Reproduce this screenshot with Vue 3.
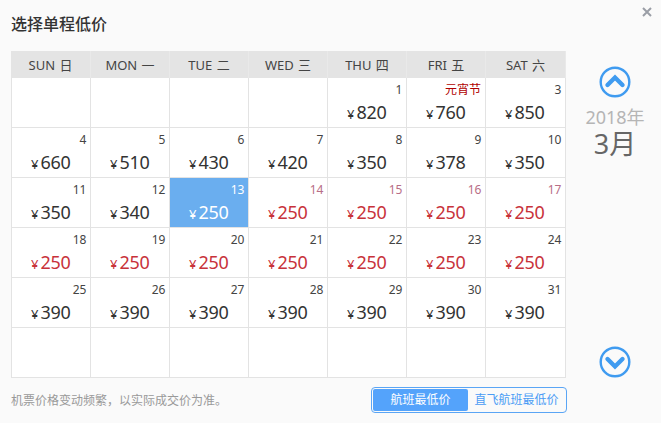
<script setup>
const weeks = ['SUN 日', 'MON 一', 'TUE 二', 'WED 三', 'THU 四', 'FRI 五', 'SAT 六']

const prices = [
  820, 760, 850,
  660, 510, 430, 420, 350, 378, 350,
  350, 340, 250, 250, 250, 250, 250,
  250, 250, 250, 250, 250, 250, 250,
  390, 390, 390, 390, 390, 390, 390,
]

const days = []
for (let i = 0; i < 4; i++) days.push({ empty: true })
prices.forEach((price, i) => {
  const date = i + 1
  days.push({
    date,
    price,
    label: date === 2 ? '元宵节' : date,
    low: price === 250 && date !== 13,
    active: date === 13,
    muted: date >= 14 && date <= 17,
  })
})
while (days.length < 42) days.push({ empty: true })
</script>

<template>
  <div class="dialog">
    <svg class="close" width="10" height="10" viewBox="0 0 10 10">
      <path d="M1 1 L9 9 M9 1 L1 9" stroke="#9a9ea6" stroke-width="2" fill="none" />
    </svg>
    <h2 class="title">选择单程低价</h2>

    <div class="main">
      <div class="calendar">
        <div class="head">
          <div v-for="w in weeks" :key="w" class="head-cell">{{ w }}</div>
        </div>
        <div class="grid">
          <div
            v-for="(d, i) in days"
            :key="i"
            class="cell"
            :class="{ active: d.active, low: d.low }"
          >
            <template v-if="!d.empty">
              <div class="date" :class="{ holiday: d.date === 2, muted: d.muted }">{{ d.label }}</div>
              <div class="price"><span class="yen">¥</span>{{ d.price }}</div>
            </template>
          </div>
        </div>
      </div>

      <div class="side">
        <svg class="arrow up" width="32" height="32" viewBox="0 0 32 32">
          <circle cx="16" cy="16" r="14.3" fill="none" stroke="#3f9bf0" stroke-width="2.4" />
          <path d="M8.5 19 L16 11.5 L23.5 19" fill="none" stroke="#3f9bf0" stroke-width="4.4" stroke-linecap="round" stroke-linejoin="miter" />
        </svg>
        <div class="year">2018年</div>
        <div class="month">3月</div>
        <svg class="arrow down" width="32" height="32" viewBox="0 0 32 32">
          <circle cx="16" cy="16" r="14.3" fill="none" stroke="#3f9bf0" stroke-width="2.4" />
          <path d="M8.5 13 L16 20.5 L23.5 13" fill="none" stroke="#3f9bf0" stroke-width="4.4" stroke-linecap="round" stroke-linejoin="miter" />
        </svg>
      </div>
    </div>

    <div class="foot">
      <span class="note">机票价格变动频繁，以实际成交价为准。</span>
      <div class="switch">
        <span class="tab on">航班最低价</span>
        <span class="tab">直飞航班最低价</span>
      </div>
    </div>
  </div>
</template>

<style>
html, body {
  margin: 0;
  background: #fafafa;
}
</style>

<style scoped>
.dialog {
  position: relative;
  box-sizing: border-box;
  width: 661px;
  height: 423px;
  padding: 0 0 0 11px;
  background: #fafafa;
  font-family: "Noto Sans", "Noto Sans CJK SC", sans-serif;
  color: #333;
  overflow: hidden;
}

.close {
  position: absolute;
  top: 7px;
  right: 9px;
}

.title {
  margin: 0;
  height: 51px;
  padding-top: 13px;
  box-sizing: border-box;
  font-size: 16px;
  line-height: 22px;
  font-weight: 500;
  color: #333;
}

.main {
  display: flex;
}

.calendar {
  width: 555px;
}

.head {
  display: grid;
  grid-template-columns: 80px repeat(5, 79px) 80px;
  height: 27px;
  background: #e4e4e4;
}

.head-cell {
  box-sizing: border-box;
  text-align: center;
  font-size: 13px;
  word-spacing: 1px;
  line-height: 28px;
  color: #444;
  border-right: 1px solid #e9e9e9;
}

.grid {
  display: grid;
  grid-template-columns: repeat(6, 79px) 80px;
  grid-auto-rows: 50px;
  background: #fff;
  border-left: 1px solid #e3e3e3;
}

.cell {
  box-sizing: border-box;
  border-right: 1px solid #e3e3e3;
  border-bottom: 1px solid #e3e3e3;
  padding: 5px 4px 0 0;
  background: #fff;
}

.cell.active {
  background: #6aaeef;
  color: #fff;
}

.date {
  text-align: right;
  font-size: 12px;
  letter-spacing: -0.3px;
  line-height: 14px;
  color: #444;
}

.date.holiday {
  color: #b00000;
  letter-spacing: 0;
}

.date.muted {
  color: #b86e86;
}

.cell.active .date {
  color: #fff;
}

.price {
  margin-top: 4px;
  padding-left: 19px;
  font-size: 18px;
  letter-spacing: -0.3px;
  line-height: 22px;
  color: #333;
}

.yen {
  font-size: 13px;
  letter-spacing: 0;
  margin-right: 2px;
}

.cell.low .price {
  color: #c8323a;
}

.cell.active .price {
  color: #fff;
}

.side {
  flex: 1;
  display: flex;
  flex-direction: column;
  align-items: center;
  padding: 15px 0 0 3px;
  box-sizing: border-box;
  height: 327px;
}

.arrow {
  flex: none;
}

.year {
  margin-top: 9px;
  font-size: 18px;
  line-height: 20px;
  color: #b5b5b5;
}

.month {
  font-size: 27px;
  line-height: 34px;
  color: #666;
}

.arrow.down {
  margin-top: auto;
}

.foot {
  display: flex;
  align-items: center;
  justify-content: space-between;
  width: 556px;
  margin-top: 9px;
}

.note {
  font-size: 12px;
  color: #999;
}

.switch {
  display: flex;
  box-sizing: border-box;
  width: 196px;
  height: 26px;
  padding: 1px;
  border: 1px solid #5aa5f5;
  border-radius: 4px;
}

.tab {
  flex: 1;
  text-align: center;
  font-size: 12px;
  line-height: 22px;
  color: #4a9cf5;
}

.tab.on {
  flex: none;
  width: 95px;
  background: #54a3fb;
  color: #fff;
  border-radius: 2px;
}
</style>
